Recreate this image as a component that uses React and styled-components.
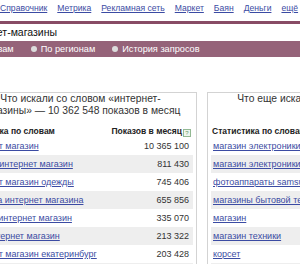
import React from 'react';
import styled, { createGlobalStyle } from 'styled-components';

const GlobalStyle = createGlobalStyle`
  html, body {
    margin: 0;
    padding: 0;
    overflow: hidden;
    background: #fff;
    font-family: "Liberation Sans", Arial, sans-serif;
  }
`;

const Page = styled.div`
  width: 590px;
  margin-left: -50px;
`;

const Nav = styled.div`
  display: flex;
  gap: 10px;
  height: 21px;
  box-sizing: border-box;
  padding: 3px 0 0 50px;
  font-size: 8.6px;
  line-height: 10px;
`;

const NavLink = styled.a`
  color: #3b4ba3;
  text-decoration: underline;
  white-space: nowrap;
`;

const Rule = styled.div`
  height: 3px;
  background: #884b65;
`;

const Search = styled.div`
  height: 17px;
  padding-left: 13px;
  font-size: 10.5px;
  line-height: 17px;
  color: #111;
`;

const Bar = styled.div`
  display: flex;
  align-items: center;
  gap: 17px;
  height: 16px;
  padding-left: 8px;
  background: #956379;
  color: #fff;
  font-size: 9.2px;
`;

const Radio = styled.label`
  display: flex;
  align-items: center;
  gap: 4px;
  white-space: nowrap;
`;

const Dot = styled.span`
  width: 6px;
  height: 6px;
  border-radius: 50%;
  background: ${(p) => (p.$on ? '#fff' : '#dcdcdc')};
  box-shadow: ${(p) => (p.$on ? 'inset 0 0 0 2px #fff, inset 0 0 0 3px #555' : 'none')};
`;

const Panels = styled.div`
  display: flex;
  gap: 10px;
  margin-top: 35px;
`;

const Panel = styled.div`
  width: ${(p) => p.$w}px;
  flex: none;
  box-sizing: border-box;
  border: 1px solid #d3d3d3;
  border-bottom: none;
  padding: 0 3px;
`;

const Title = styled.div`
  padding-left: ${(p) => p.$shift || 0}px;
  margin-bottom: 8px;
  font-size: 10.3px;
  line-height: 12px;
  text-align: center;
  color: #333;
  white-space: nowrap;
`;

const Table = styled.table`
  width: 100%;
  border-collapse: collapse;
`;

const Head = styled.th`
  height: 12px;
  padding: 0 ${(p) => (p.$right ? 2 : 0)}px 0 ${(p) => (p.$right ? 0 : p.$pad)}px;
  font-size: 8.5px;
  font-weight: bold;
  color: #222;
  text-align: ${(p) => (p.$right ? 'right' : 'left')};
  white-space: nowrap;
`;

const Help = styled.span`
  display: inline-block;
  width: 6px;
  height: 6px;
  margin-left: 1px;
  border: 1px solid #93b993;
  background: #eef6ee;
  color: #6a9a6a;
  font-size: 6px;
  line-height: 6px;
  text-align: center;
  vertical-align: -1px;
  font-weight: normal;
`;

const Row = styled.tr`
  height: 18px;
  background: ${(p) => (p.$odd ? '#eeeeee' : '#fff')};
`;

const Word = styled.td`
  padding: 0 0 0 ${(p) => p.$pad}px;
  font-size: 9px;
  white-space: nowrap;
`;

const Count = styled.td`
  padding-right: 4px;
  font-size: 9px;
  color: #333;
  text-align: right;
  white-space: nowrap;
`;

const WordLink = styled.a`
  color: #3b4ba3;
  text-decoration: underline;
`;

const navItems = ['Справочник', 'Метрика', 'Рекламная сеть', 'Маркет', 'Баян', 'Деньги', 'ещё'];

const leftRows = [
  ['интернет магазин', '10 365 100'],
  ['лучший интернет магазин', '811 430'],
  ['интернет магазин одежды', '745 406'],
  ['шаблона интернет магазина', '655 856'],
  ['отзывы интернет магазин', '335 070'],
  ['сайт интернет магазин', '213 322'],
  ['интернет магазин екатеринбург', '203 428'],
  ['интернет магазин москва', '198 210'],
];

const rightRows = [
  ['магазин электроники', '92 514'],
  ['магазин электроники москва', '61 220'],
  ['фотоаппараты samsung', '44 871'],
  ['магазины бытовой техники', '40 113'],
  ['магазин', '38 972'],
  ['магазин техники', '31 540'],
  ['корсет', '29 806'],
  ['ноутбуки', '27 115'],
];

const StatTable = ({ rows, pad, headPad }) => (
  <Table>
    <thead>
      <tr>
        <Head $pad={headPad}>Статистика по словам</Head>
        <Head $right>
          Показов в месяц
          <Help>?</Help>
        </Head>
      </tr>
    </thead>
    <tbody>
      {rows.map(([word, count], i) => (
        <Row key={word} $odd={i % 2 === 1}>
          <Word $pad={pad}>
            <WordLink>{word}</WordLink>
          </Word>
          <Count>{count}</Count>
        </Row>
      ))}
    </tbody>
  </Table>
);

const App = () => (
  <Page>
    <GlobalStyle />
    <Nav>
      {navItems.map((item) => (
        <NavLink key={item}>{item}</NavLink>
      ))}
    </Nav>
    <Rule />
    <Search>интернет-магазины</Search>
    <Bar>
      <Radio>
        <Dot $on />
        По словам
      </Radio>
      <Radio>
        <Dot />
        По регионам
      </Radio>
      <Radio>
        <Dot />
        История запросов
      </Radio>
    </Bar>
    <Panels>
      <Panel $w={247}>
        <Title $shift={14}>
          Что искали со словом «интернет-
          <br />
          магазины» — 10 362 548 показов в месяц
        </Title>
        <StatTable rows={leftRows} pad={11} headPad={7} />
      </Panel>
      <Panel $w={272}>
        <Title>
          Что еще искали люди, искавшие «интернет-
          <br />
          магазины»:
        </Title>
        <StatTable rows={rightRows} pad={2} headPad={1} />
      </Panel>
    </Panels>
  </Page>
);

export default App;
